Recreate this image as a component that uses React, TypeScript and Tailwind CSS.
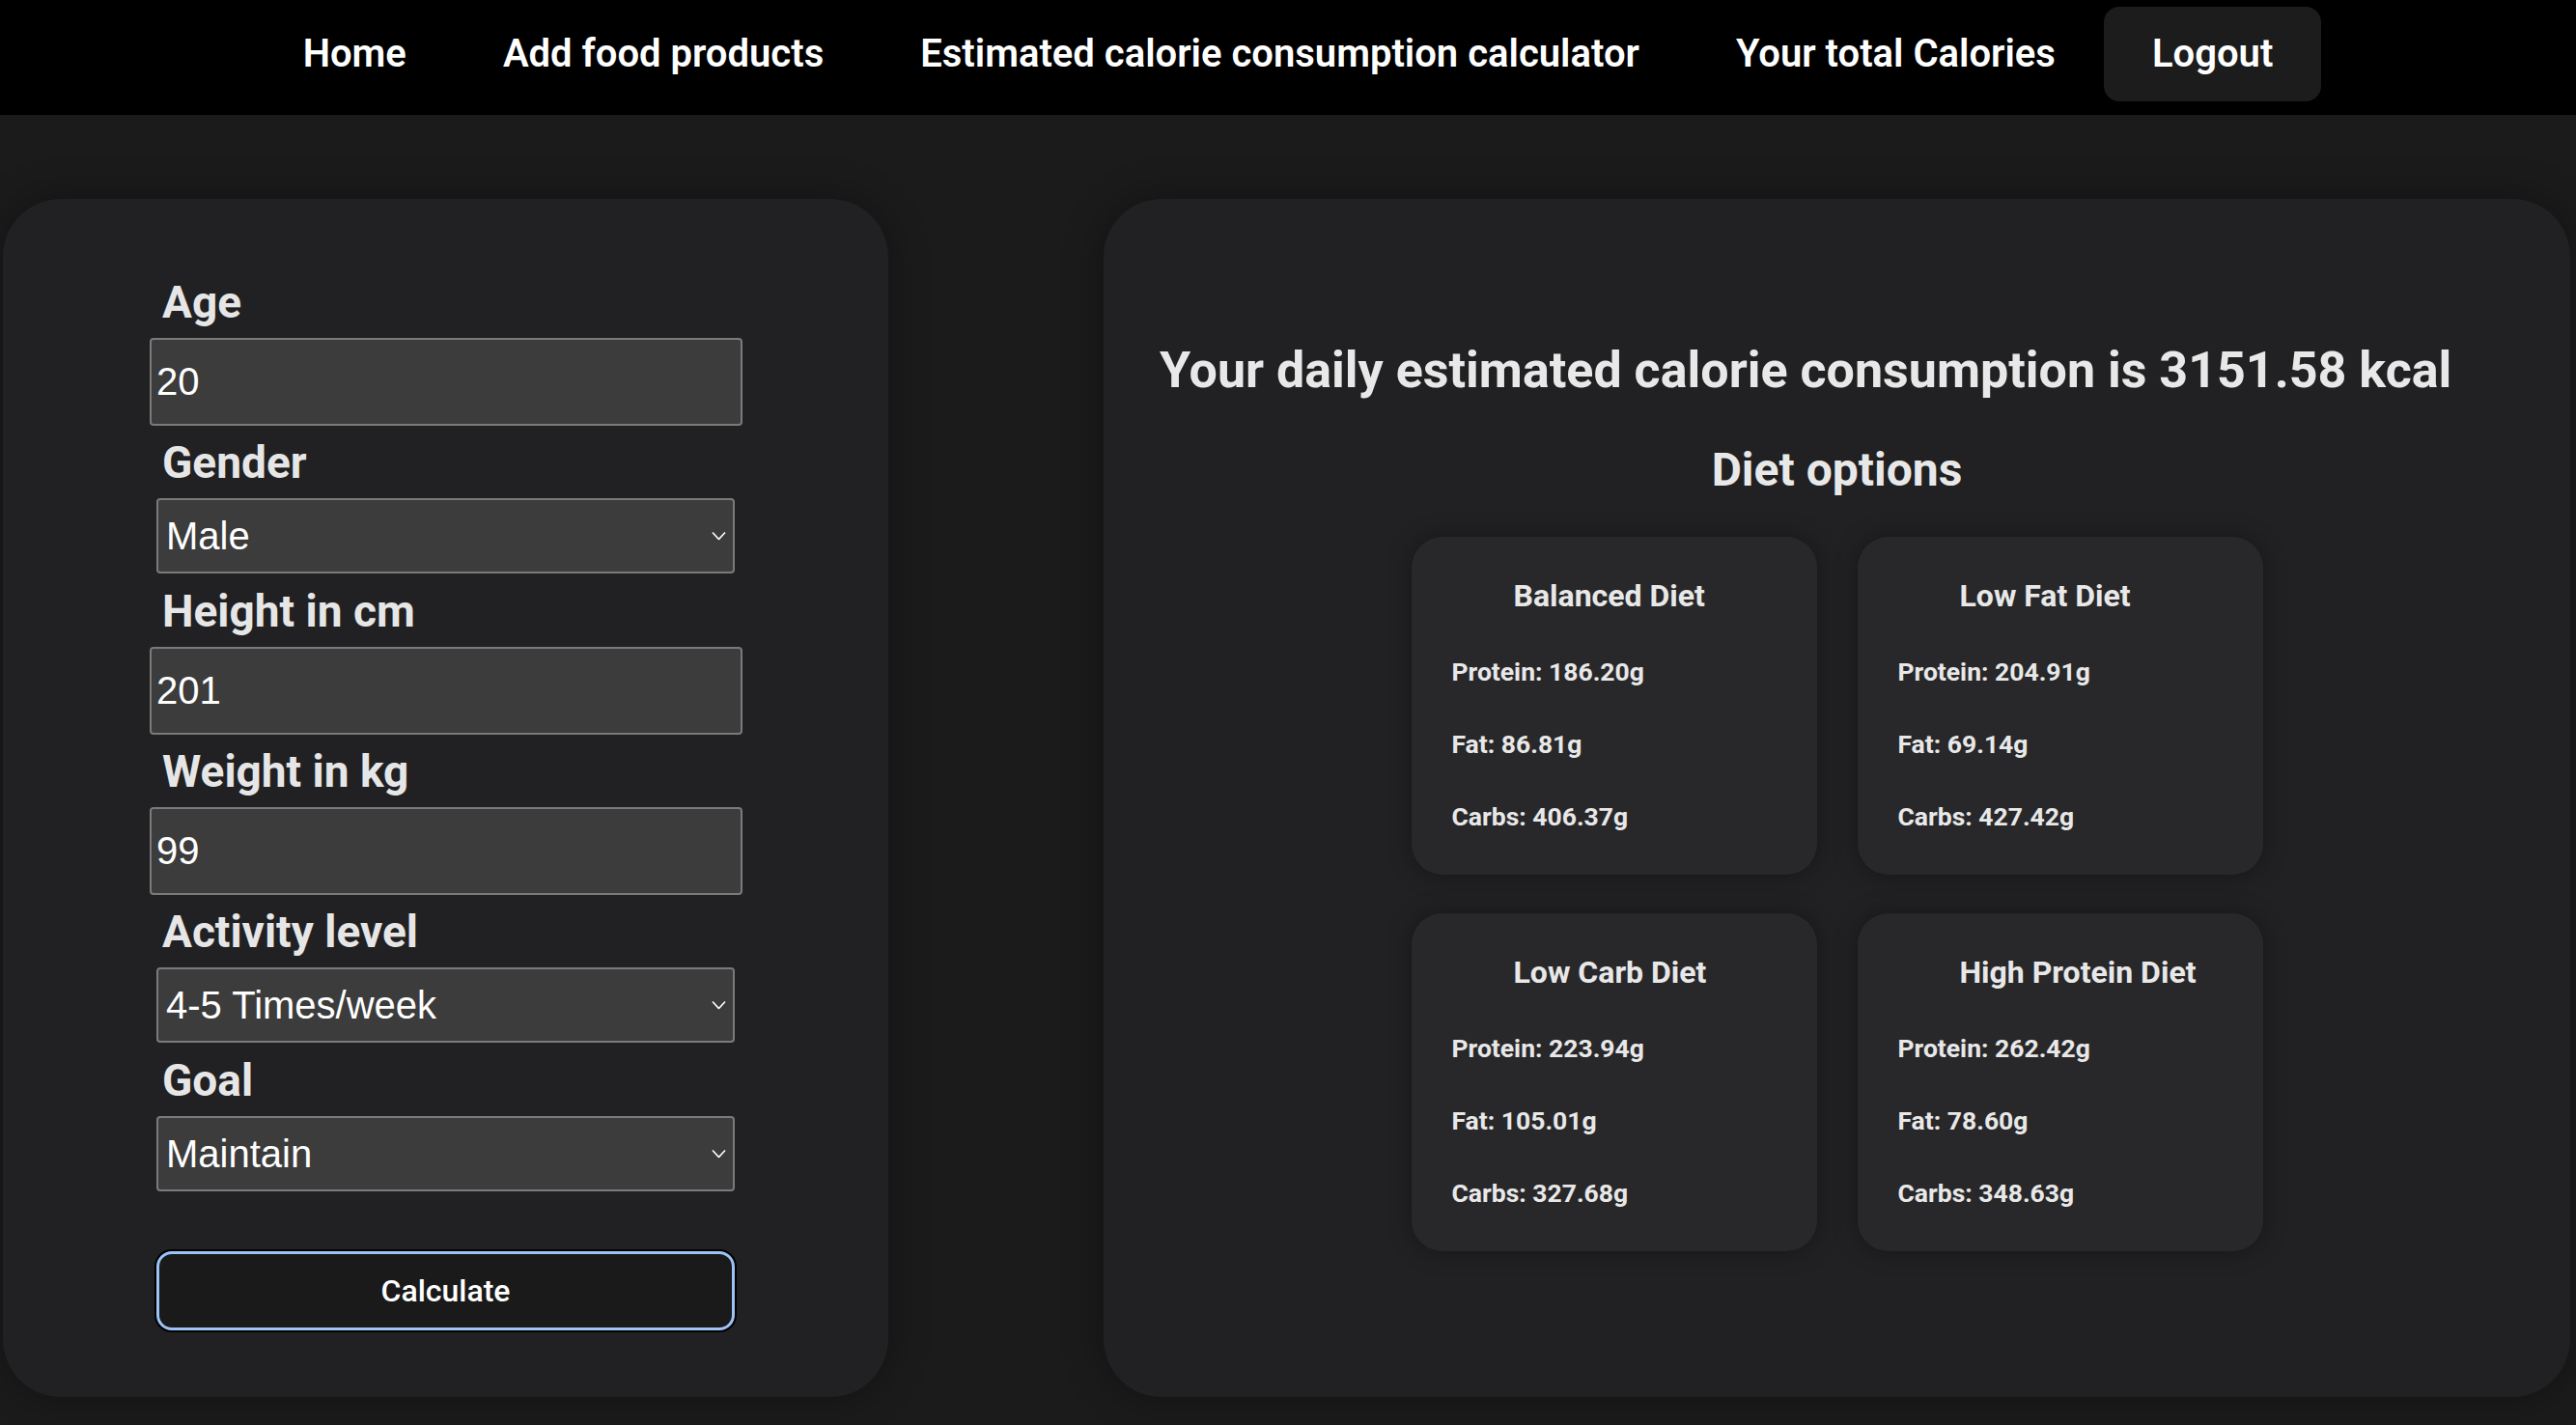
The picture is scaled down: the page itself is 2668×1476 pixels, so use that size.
import React from "react";

const navItems = [
  "Home",
  "Add food products",
  "Estimated calorie consumption calculator",
  "Your total Calories",
];

const diets = [
  { title: "Balanced Diet", p: "186.20", f: "86.81", c: "406.37" },
  { title: "Low Fat Diet", p: "204.91", f: "69.14", c: "427.42" },
  { title: "Low Carb Diet", p: "223.94", f: "105.01", c: "327.68" },
  { title: "High Protein Diet", p: "262.42", f: "78.60", c: "348.63" },
];

function Chevron() {
  return (
    <svg
      className="pointer-events-none absolute right-[9px] top-1/2 -translate-y-1/2"
      width="15"
      height="9"
      viewBox="0 0 15 9"
      fill="none"
    >
      <path d="M1 1 L7.5 8 L14 1" stroke="#ffffff" strokeWidth="1.6" />
    </svg>
  );
}

function Label({ children }: { children: React.ReactNode }) {
  return (
    <label className="block pl-[13px] text-[46px] leading-[52px] font-bold text-[#e6e6e6]">
      {children}
    </label>
  );
}

function TextInput({ value }: { value: string }) {
  return (
    <input
      readOnly
      value={value}
      className="mt-[11px] mb-[12px] block h-[91px] w-[614px] rounded-[4px] border-2 border-[#7a7a7a] bg-[#3c3c3c] pl-[5px] text-[40px] text-white outline-none [font-family:'Liberation_Sans',Arial,sans-serif]"
    />
  );
}

function Select({ value, options }: { value: string; options: string[] }) {
  return (
    <div className="relative mt-[11px] mb-[13px] ml-[7px] h-[78px] w-[599px]">
      <select
        value={value}
        onChange={() => {}}
        className="block h-full w-full appearance-none rounded-[4px] border-2 border-[#7a7a7a] bg-[#3c3c3c] pl-[8px] text-[40px] text-white outline-none [font-family:'Liberation_Sans',Arial,sans-serif]"
      >
        {options.map((o) => (
          <option key={o} value={o}>
            {o}
          </option>
        ))}
      </select>
      <Chevron />
    </div>
  );
}

export default function App() {
  return (
    <div className="min-h-screen w-full bg-[#1b1b1c] [font-family:Roboto,'Noto_Sans',sans-serif]">
      <nav className="flex h-[119px] items-start justify-center bg-black pt-[7px]">
        {navItems.map((n) => (
          <a
            key={n}
            className="flex h-[98px] items-center px-[50px] text-[40px] font-semibold text-white"
          >
            {n}
          </a>
        ))}
        <a className="flex h-[98px] items-center rounded-[16px] bg-[#1c1c1c] px-[50px] text-[40px] font-semibold text-white">
          Logout
        </a>
      </nav>

      <main className="flex pt-[87px] pb-[29px]">
        <section className="ml-[3px] h-[1241px] w-[917px] rounded-[60px] bg-[#212123] pt-[81px] pl-[152px] shadow-[0_0_40px_rgba(0,0,0,0.35)]">
          <Label>Age</Label>
          <TextInput value="20" />
          <Label>Gender</Label>
          <Select value="Male" options={["Male", "Female"]} />
          <Label>Height in cm</Label>
          <TextInput value="201" />
          <Label>Weight in kg</Label>
          <TextInput value="99" />
          <Label>Activity level</Label>
          <Select
            value="4-5 Times/week"
            options={["Sedentary", "1-3 Times/week", "4-5 Times/week", "Daily"]}
          />
          <Label>Goal</Label>
          <Select value="Maintain" options={["Lose", "Maintain", "Gain"]} />
          <button className="mt-[62px] ml-[7px] flex h-[82px] w-[599px] items-center justify-center rounded-[16px] border-[3px] border-[#9cc3f7] bg-[#1a1a1a] text-[32px] font-medium text-white shadow-[0_0_0_2px_#000]">
            Calculate
          </button>
        </section>

        <section className="ml-[223px] h-[1241px] w-[1519px] rounded-[60px] bg-[#212123] pt-[147px] shadow-[0_0_40px_rgba(0,0,0,0.35)]">
          <h1 className="pl-[58px] text-[52px] leading-[62px] font-bold text-[#e8e8e8]">
            Your daily estimated calorie consumption is 3151.58 kcal
          </h1>
          <h2 className="mt-[45px] text-center text-[48px] leading-[54px] font-bold text-[#e8e8e8]">
            Diet options
          </h2>
          <div className="mx-auto mt-[42px] grid w-[882px] grid-cols-2 gap-x-[42px] gap-y-[40px]">
            {diets.map((d) => (
              <div
                key={d.title}
                className="h-[350px] rounded-[32px] bg-[#28282a] px-[42px] pt-[42px] shadow-[0_0_24px_rgba(0,0,0,0.35)]"
              >
                <h3 className="pl-[64px] text-[32px] leading-[38px] font-bold text-[#e8e8e8]">
                  {d.title}
                </h3>
                <p className="mt-[45px] text-[26.5px] leading-[30px] font-bold text-[#e8e8e8]">
                  Protein: {d.p}g
                </p>
                <p className="mt-[45px] text-[26.5px] leading-[30px] font-bold text-[#e8e8e8]">
                  Fat: {d.f}g
                </p>
                <p className="mt-[45px] text-[26.5px] leading-[30px] font-bold text-[#e8e8e8]">
                  Carbs: {d.c}g
                </p>
              </div>
            ))}
          </div>
        </section>
      </main>
    </div>
  );
}
